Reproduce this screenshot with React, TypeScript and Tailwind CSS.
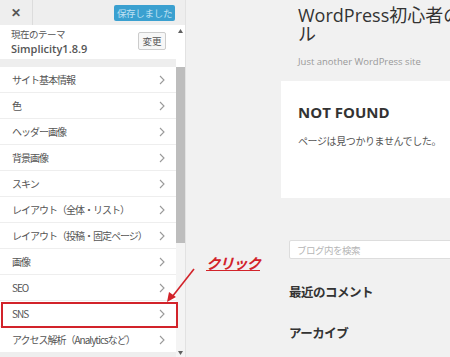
import React from 'react';

const jp = { fontFamily: '"Noto Sans CJK JP", "Open Sans", sans-serif' };
const latin = { fontFamily: '"Open Sans", "Noto Sans CJK JP", sans-serif' };

const menuItems = [
  'サイト基本情報',
  '色',
  'ヘッダー画像',
  '背景画像',
  'スキン',
  'レイアウト（全体・リスト）',
  'レイアウト（投稿・固定ページ）',
  '画像',
  'SEO',
  'SNS',
  'アクセス解析（Analyticsなど）',
];

const Chevron: React.FC = () => (
  <svg width="6" height="10" viewBox="0 0 6 10" className="shrink-0">
    <path d="M1 1 L5 5 L1 9" fill="none" stroke="#9a9a9a" strokeWidth="1.1" />
  </svg>
);

const Sidebar: React.FC = () => (
  <aside className="w-[186px] h-full flex flex-col shrink-0 border-r border-[#e2e2e2] bg-[#eeeeee]">
    {/* header */}
    <div className="h-[25px] flex items-center shrink-0 bg-[#eeeeee]">
      <div className="w-[33px] h-full flex items-center justify-center border-r border-[#dcdcdc] text-[#555] text-[12px] font-bold" style={latin}>
        ✕
      </div>
      <div className="flex-1" />
      <button
        className="h-[16px] w-[61px] mr-[10px] rounded-[2px] bg-[#3aa0d0] text-[#bfe1f2] text-[9.5px] leading-[16px] whitespace-nowrap tracking-[-0.3px]"
        style={jp}
      >
        保存しました
      </button>
    </div>

    <div className="flex-1 flex min-h-0">
      <div className="w-[176px] flex flex-col">
        {/* current theme */}
        <div className="h-[34px] bg-white flex items-center pl-[11px] pr-[10px]">
          <div className="flex-1 flex flex-col">
            <span className="text-[9.5px] leading-[12px] text-[#555] tracking-[-0.5px]" style={jp}>現在のテーマ</span>
            <span className="text-[11px] leading-[14px] text-[#555] font-semibold mt-[2px]" style={latin}>Simplicity1.8.9</span>
          </div>
          <button
            className="w-[28px] h-[18px] border border-[#ccc] bg-[#f7f7f7] rounded-[2px] text-[9.5px] leading-[16px] text-[#555] mt-[-2px]"
            style={jp}
          >
            変更
          </button>
        </div>
        <div className="h-[8px] bg-[#eeeeee]" />

        {/* sections */}
        <ul className="flex flex-col bg-white">
          {menuItems.map((item) => (
            <li
              key={item}
              className="h-[26px] flex items-center justify-between pl-[12px] pr-[11px] border-b border-[#eeeeee] text-[10px] text-[#555] whitespace-nowrap tracking-[-1px]"
              style={jp}
            >
              <span>{item}</span>
              <Chevron />
            </li>
          ))}
        </ul>
      </div>

      {/* scrollbar */}
      <div className="w-[9px] flex flex-col bg-[#f4f4f4]">
        <div className="h-[42px] bg-white flex justify-center pt-[4px]">
          <svg width="5" height="4" viewBox="0 0 5 4">
            <path d="M0 4 L2.5 0 L5 4 Z" fill="#606060" />
          </svg>
        </div>
        <div className="h-[176px] bg-[#bdbdbd]" />
        <div className="flex-1" />
        <div className="h-[8px] flex justify-center items-center">
          <svg width="5" height="4" viewBox="0 0 5 4">
            <path d="M0 0 L2.5 4 L5 0 Z" fill="#606060" />
          </svg>
        </div>
      </div>
    </div>
  </aside>
);

const Preview: React.FC = () => (
  <main className="flex-1 h-full bg-[#f1f1f1] overflow-hidden flex flex-col">
    <div className="pl-[112px] pt-[6px]">
      <h1 className="text-[18px] leading-[19px] text-[#333] font-normal whitespace-nowrap" style={latin}>
        WordPress初心者のためのマニュア
        <br />
        ル
      </h1>
      <p className="text-[9.5px] text-[#999] mt-[11px]" style={latin}>Just another WordPress site</p>
    </div>

    <div className="ml-[95px] mt-[12px] h-[117px] bg-white pl-[17px] pt-[22px] w-[300px]">
      <h2 className="text-[15px] leading-[18px] font-bold text-[#333]" style={latin}>NOT FOUND</h2>
      <p className="text-[10px] text-[#555] mt-[12px] tracking-[-0.4px]" style={jp}>ページは見つかりませんでした。</p>
    </div>

    <div className="ml-[103px] mt-[42px]">
      <div className="h-[19px] w-[200px] bg-white border border-[#dddddd] rounded-[2px] flex items-center pl-[7px] text-[9.5px] text-[#b5b5b5] tracking-[-0.5px]" style={jp}>
        ブログ内を検索
      </div>
      <h3 className="text-[12.5px] font-bold text-[#333] mt-[24px] tracking-[-0.5px]" style={jp}>最近のコメント</h3>
      <h3 className="text-[12.5px] font-bold text-[#333] mt-[22px] tracking-[-0.5px]" style={jp}>アーカイブ</h3>
    </div>
  </main>
);

const App: React.FC = () => {
  return (
    <div className="relative w-[450px] h-[357px] flex overflow-hidden bg-[#f1f1f1]">
      <Sidebar />
      <Preview />

      {/* annotation */}
      <div className="absolute left-[1px] top-[302px] w-[177px] h-[26px] border-2 border-[#d2232a]" />
      <span
        className="absolute left-[206px] top-[253px] text-[14.5px] font-bold italic underline text-[#d2232a] leading-[20px] tracking-[-1px]"
        style={jp}
      >
        クリック
      </span>
      <svg className="absolute left-0 top-0" width="450" height="357">
        <line x1="194" y1="269" x2="172" y2="297" stroke="#d2232a" strokeWidth="1.6" />
        <path d="M167 302 L169 292 L176 297 Z" fill="#d2232a" />
      </svg>
    </div>
  );
};

export default App;
